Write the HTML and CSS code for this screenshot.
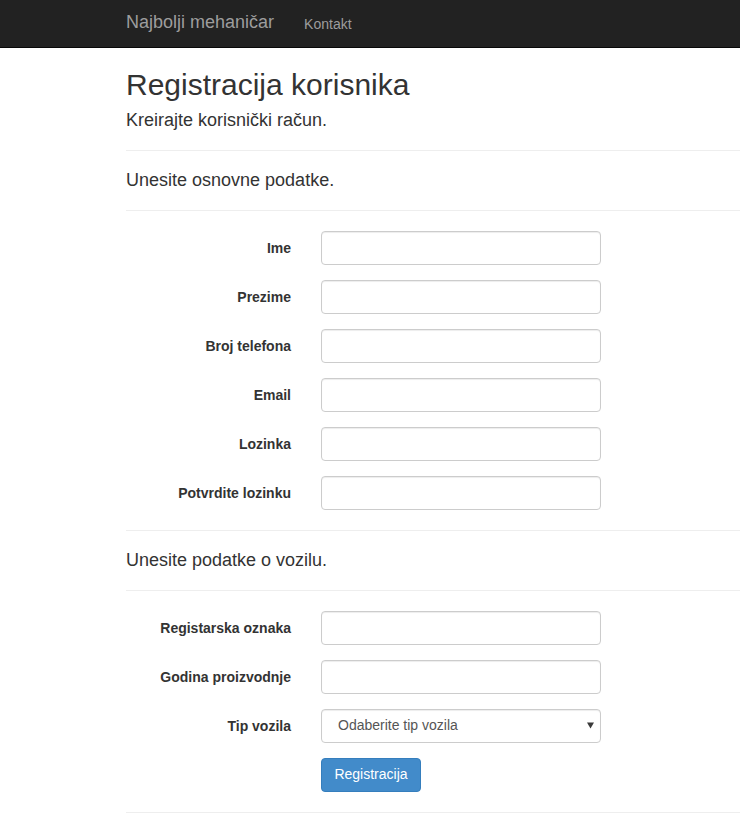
FILE: index.html
```html
<!DOCTYPE html>
<html lang="hr">
<head>
<meta charset="utf-8">
<title>Registracija korisnika</title>
<link rel="stylesheet" href="styles.css">
</head>
<body>
<nav class="navbar">
  <div class="navbar-inner">
    <a class="brand" href="#">Najbolji mehaničar</a>
    <a class="nav-link" href="#">Kontakt</a>
  </div>
</nav>
<main class="container">
  <h2 class="title">Registracija korisnika</h2>
  <h4 class="section">Kreirajte korisnički račun.</h4>
  <hr>
  <h4 class="section">Unesite osnovne podatke.</h4>
  <hr>
  <form class="form">
    <div class="form-group"><label class="label">Ime</label><input class="control" type="text"></div>
    <div class="form-group"><label class="label">Prezime</label><input class="control" type="text"></div>
    <div class="form-group"><label class="label">Broj telefona</label><input class="control" type="text"></div>
    <div class="form-group"><label class="label">Email</label><input class="control" type="text"></div>
    <div class="form-group"><label class="label">Lozinka</label><input class="control" type="password"></div>
    <div class="form-group"><label class="label">Potvrdite lozinku</label><input class="control" type="password"></div>
  </form>
  <hr>
  <h4 class="section">Unesite podatke o vozilu.</h4>
  <hr>
  <form class="form">
    <div class="form-group"><label class="label">Registarska oznaka</label><input class="control" type="text"></div>
    <div class="form-group"><label class="label">Godina proizvodnje</label><input class="control" type="text"></div>
    <div class="form-group">
      <label class="label">Tip vozila</label>
      <div class="select-wrap">
        <select class="control select"><option>Odaberite tip vozila</option></select>
        <svg class="caret" width="7" height="7" viewBox="0 0 7 7"><path d="M0 0.5H7L3.5 6.5Z" fill="#3a3a3a"/></svg>
      </div>
    </div>
    <div class="form-group">
      <span></span>
      <div><button class="btn" type="button">Registracija</button></div>
    </div>
  </form>
  <hr>
</main>
</body>
</html>
```
FILE: styles.css
```css
* { box-sizing: border-box; }
html, body { margin: 0; padding: 0; overflow-x: hidden; }
body {
  font-family: "Liberation Sans", Arial, Helvetica, sans-serif;
  font-size: 14px;
  line-height: 1.42857;
  color: #333;
  background: #fff;
}
.navbar {
  background: #222;
  border-bottom: 1px solid #080808;
  height: 48px;
}
.navbar-inner {
  display: flex;
  align-items: flex-start;
  padding-left: 126px;
  padding-top: 12px;
  gap: 30px;
}
.brand {
  font-size: 18px;
  line-height: 20px;
  color: #9d9d9d;
  text-decoration: none;
}
.nav-link {
  font-size: 14px;
  line-height: 20px;
  padding-top: 2px;
  color: #9d9d9d;
  text-decoration: none;
}
.container {
  margin-left: 111px;
  padding-left: 15px;
}
.title {
  font-size: 30px;
  font-weight: 500;
  line-height: 1.1;
  margin: 20px 0 10px;
}
.section {
  font-size: 18px;
  font-weight: 500;
  line-height: 19px;
  margin: 10px 0;
}
hr {
  border: 0;
  border-top: 1px solid #eee;
  margin: 20px 0;
  height: 0;
}
.form { margin: 0; }
.form-group {
  display: grid;
  grid-template-columns: 165px 280px;
  column-gap: 30px;
  margin-bottom: 15px;
}
.label {
  font-weight: bold;
  text-align: right;
  padding-top: 7px;
  line-height: 20px;
}
.control {
  display: block;
  width: 280px;
  height: 34px;
  padding: 6px 12px;
  font-family: inherit;
  font-size: 14px;
  line-height: 1.42857;
  color: #555;
  background: #fff;
  border: 1px solid #ccc;
  border-radius: 4px;
  box-shadow: inset 0 1px 1px rgba(0,0,0,.075);
  margin: 0;
}
.select-wrap { position: relative; width: 280px; }
.select {
  -webkit-appearance: none;
  appearance: none;
  padding-left: 16px;
}
.caret {
  position: absolute;
  right: 7px;
  top: 13px;
}
.btn {
  display: inline-block;
  height: 34px;
  padding: 6px 12px;
  font-family: inherit;
  font-size: 14px;
  line-height: 1.42857;
  color: #fff;
  background: #428bca;
  border: 1px solid #357ebd;
  border-radius: 4px;
  width: 100px;
  cursor: pointer;
}
```
